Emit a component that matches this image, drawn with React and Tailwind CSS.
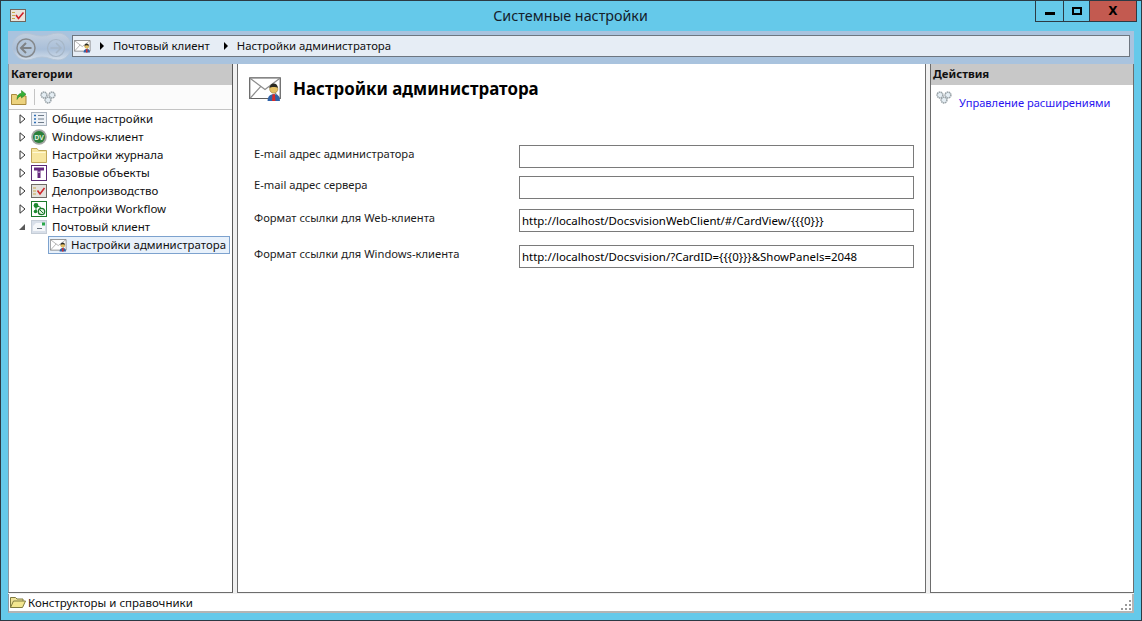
const font = { fontFamily: '"Noto Sans", sans-serif' }

function Envelope({ className }) {
  return (
    <svg viewBox="0 0 32 24" className={`shrink-0 ${className}`}>
      <path d="M.7 1.700h29.600v20H.7z" fill="#fff" stroke="#5f5f5f" strokeWidth="1.200" />
      <path d="M1 2l14.500 11L30 2M1 21.500l10.500-11.500M30 21.500L19.500 10" fill="none" stroke="#8c8c8c" strokeWidth="1.200" />
      <path d="M18 24c0-4 2-6.500 6-6.500s6 2.500 6 6.500z" fill="#2f62a8" />
      <circle cx="24" cy="12.500" r="4" fill="#e6c163" stroke="#8a6d2a" strokeWidth="0.500" />
      <path d="M20 11.500c.2-3 2-4.300 4-4.300s3.800 1.300 4 4.300c-1.500-1.400-6.500-1.400-8 0z" fill="#2a2a22" />
      <path d="M22.800 17.500h2.400L25.600 24h-3.200z" fill="#d92b2b" />
    </svg>
  )
}

function Gears({ className }) {
  return (
    <svg viewBox="0 0 16 13" className={className} fill="#e4edf3" stroke="#98a1a6" strokeWidth="1.500">
      <circle cx="4" cy="4" r="2.900" strokeDasharray="1.500 .5" />
      <circle cx="12" cy="4" r="2.900" strokeDasharray="1.500 .5" />
      <circle cx="8" cy="9" r="2.900" strokeDasharray="1.500 .5" />
    </svg>
  )
}

function FolderUp() {
  return (
    <svg viewBox="0 0 16 16" className="w-[16px] h-[16px]">
      <path d="M.5 5.500h5l1 1.500h8.500v8.500H.5z" fill="#ecd27e" stroke="#a8893c" />
      <path d="M6 10.500c0-4 2-6 4.500-6.300V1.500L15 5.200l-4.500 3.800V6.700C8.500 7 7.300 8.300 6 10.500z" fill="#35b035" stroke="#1d7a1d" strokeWidth="0.500" />
    </svg>
  )
}

function Folder() {
  return (
    <svg viewBox="0 0 16 16" className="w-[16px] h-[16px]">
      <path d="M.5 1.500h5.500l1.500 2h8v12H.5z" fill="#f7e6a0" stroke="#c2a95a" />
      <path d="M1.500 5h13v1H1.500z" fill="#fff8d4" />
    </svg>
  )
}

function OpenFolder() {
  return (
    <svg viewBox="0 0 16 13" className="w-[16px] h-[13px] ml-[1px]">
      <path d="M.5 11.500v-10h5l1.500 1.500h6v2" fill="#efe39a" stroke="#7f7a3f" />
      <path d="M.5 11.500h12l3-6.500H3.500z" fill="#f3e68f" stroke="#7f7a3f" />
    </svg>
  )
}

function ListIcon() {
  return (
    <svg viewBox="0 0 16 14" className="w-[16px] h-[14px]">
      <rect x="0.500" y="0.500" width="15" height="13" fill="#eef2f7" stroke="#a9b3bf" />
      <path d="M7 3.500h6M7 7h6M7 10.500h6" stroke="#6f7c8a" />
      <path d="M3 3.500h2M3 7h2M3 10.500h2" stroke="#2e6fb7" strokeWidth="1.500" />
    </svg>
  )
}

function DvIcon() {
  return (
    <svg viewBox="0 0 16 16" className="w-[16px] h-[16px]">
      <circle cx="8" cy="8" r="7.800" fill="#a3a6a3" />
      <circle cx="8" cy="8" r="6" fill="#2a7f3a" />
      <text x="8" y="10.500" textAnchor="middle" fontSize="7" fontWeight="700" fill="#dcebdc" style={font}>DV</text>
    </svg>
  )
}

function HammerIcon() {
  return (
    <svg viewBox="0 0 16 16" className="w-[16px] h-[16px]">
      <rect x="0.500" y="0.500" width="15" height="15" fill="#fff" stroke="#5b2a75" />
      <path d="M3 2.500h10v3h-3.500V13h-3V5.500H3z" fill="#66297f" />
      <path d="M7 6.500h2V8H7z" fill="#b58fc6" />
    </svg>
  )
}

function CaseIcon() {
  return (
    <svg viewBox="0 0 16 14" className="w-[16px] h-[14px]">
      <rect x="0.500" y="0.500" width="15" height="13" fill="#e4e2de" stroke="#6f6a66" />
      <path d="M2 4h3M2 7h3M2 10h3" stroke="#c9a74e" />
      <path d="M6.500 6.500l2.500 3.500 4.500-6" fill="none" stroke="#d0262c" strokeWidth="1.600" />
    </svg>
  )
}

function WorkflowIcon() {
  return (
    <svg viewBox="0 0 16 16" className="w-[16px] h-[16px]">
      <rect x="0.500" y="0.500" width="15" height="15" fill="#fff" stroke="#1b7a2a" />
      <circle cx="5" cy="4.500" r="2.400" fill="#1b8a2e" />
      <circle cx="4.500" cy="10.500" r="1.800" fill="#1b8a2e" />
      <path d="M5 4.500l5 2M5 4.500V10" stroke="#1b8a2e" />
      <circle cx="10.500" cy="10.500" r="3.200" fill="#dff0df" stroke="#1b7a2a" strokeWidth="1.300" />
      <path d="M9 9l3 3" stroke="#1b7a2a" />
    </svg>
  )
}

function MailClientIcon() {
  return (
    <svg viewBox="0 0 16 14" className="w-[16px] h-[14px]">
      <rect x="0.500" y="0.500" width="15" height="13" fill="#d8dfe9" stroke="#c4ccd6" />
      <path d="M5 3h9v8H2V6z" fill="#f5f7fa" />
      <path d="M6 8.500h5" stroke="#66717d" />
      <rect x="11" y="2.500" width="3" height="3" fill="#29a84a" />
    </svg>
  )
}

function Arrow({ open }) {
  if (open) {
    return (
      <svg viewBox="0 0 8 8" className="w-[8px] h-[8px]">
        <path d="M7 1v6H1z" fill="#595959" />
      </svg>
    )
  }
  return (
    <svg viewBox="0 0 7 10" className="w-[7px] h-[10px]">
      <path d="M1 .800L6 5 1 9.200z" fill="#fff" stroke="#333" />
    </svg>
  )
}

function TreeRow({ icon, label, open }) {
  return (
    <div className="h-[18px] flex items-center pl-[10px] text-[11.500px] text-[#101010] whitespace-nowrap">
      <div className="w-[8px] flex justify-center"><Arrow open={open} /></div>
      <div className="w-[16px] ml-[5px] flex justify-center">{icon}</div>
      <span className="ml-[5px]">{label}</span>
    </div>
  )
}

function FieldRow({ label, value, className }) {
  return (
    <div className={`flex items-center ${className}`}>
      <label className="w-[265px] text-[11.200px] text-[#1c1c1c] whitespace-nowrap -mt-[5px]">{label}</label>
      <div className="w-[395px] h-[23px] border border-[#7a7a7a] bg-white px-[2px] flex items-center text-[11.450px] text-black whitespace-nowrap">
        {value}
      </div>
    </div>
  )
}

function Header({ children }) {
  return (
    <div className="h-[21px] pb-[2px] pl-[2px] bg-[#c8c8c8] flex items-center text-[11.400px] font-bold text-[#111] whitespace-nowrap">
      {children}
    </div>
  )
}

export default function App() {
  return (
    <div style={font} className="w-[1142px] h-[621px] bg-[#65c9ea] border border-[#2c3a44] flex flex-col overflow-hidden">
      {/* title bar */}
      <div className="h-[30px] flex items-start shrink-0">
        <div className="ml-[9px] mt-[8px]">
          <svg viewBox="0 0 16 13" className="w-[16px] h-[13px]">
            <rect x="0.500" y="0.500" width="15" height="12" fill="#e9e4dc" stroke="#70665e" />
            <path d="M2 3.500h3M2 6.500h3M2 9.500h3" stroke="#c9a74e" />
            <path d="M6 6l2.500 3.500 5-6" fill="none" stroke="#cf2028" strokeWidth="1.600" />
          </svg>
        </div>
        <div className="flex-1 text-center text-[14.300px] leading-[20px] mt-[5px] text-[#14202a] pl-[80px]">Системные настройки</div>
        <div className="flex h-[21px] border border-t-0 border-[#2c3a44] mr-[4px]">
          <button className="w-[28px] flex items-center justify-center border-r border-[#2c3a44]">
            <span className="w-[10px] h-[3px] bg-black mt-[4px]" />
          </button>
          <button className="w-[25px] flex items-center justify-center">
            <span className="w-[10px] h-[8px] border-2 border-black" />
          </button>
          <button className="w-[47px] bg-[#c35a50] flex items-center justify-center text-black text-[12px] font-bold border-l border-[#2c3a44]" style={{ fontFamily: '"DejaVu Sans", sans-serif' }}>
            X
          </button>
        </div>
      </div>

      {/* inner window */}
      <div className="flex-1 mx-[7px] mb-[7px] flex flex-col bg-[#a9c3de] min-h-0">
        {/* address bar */}
        <div className="h-[33px] shrink-0 flex items-start pl-[4px] pr-[4px] bg-[#a9c3de]">
          <svg viewBox="0 0 60 29" className="w-[60px] h-[29px] shrink-0 mt-[1px]">
            <defs>
              <linearGradient id="capsule" x1="0" y1="0" x2="0" y2="1">
                <stop offset="0" stopColor="#c3d0df" />
                <stop offset="0.600" stopColor="#a9bfd9" />
                <stop offset="1" stopColor="#d3deea" />
              </linearGradient>
            </defs>
            <path d="M14 1.500c7 0 9 2.500 16 2.500s9-3 16-3c7.500 0 13 6 13 13.500S53.500 28 46 28c-7 0-9-3-16-3s-9 3-16 3C6.500 28 .8 22 .8 14.500S6.500 1.500 14 1.500z" fill="url(#capsule)" stroke="#b4c4d6" />
            <circle cx="14" cy="16" r="9" fill="#b4c6da" stroke="#85898d" strokeWidth="1.500" />
            <path d="M19.500 16h-10M14 11l-5 5 5 5" fill="none" stroke="#7e8285" strokeWidth="2" />
            <circle cx="44" cy="16" r="8.500" fill="none" stroke="#a6b6c7" strokeWidth="1.200" />
            <path d="M38.500 16h10M44 11l5 5-5 5" fill="none" stroke="#a6b6c7" strokeWidth="1.500" />
          </svg>
          <div className="flex-1 h-[22px] mt-[4px] pb-[1px] border border-[#6d7680] bg-[#e6edf5] flex items-center text-[11.350px] text-[#101010] whitespace-nowrap">
            <Envelope className="w-[17px] h-[14px] ml-[1px]" />
            <span className="ml-[9px] w-0 h-0 border-y-[4px] border-y-transparent border-l-[4px] border-l-black" />
            <span className="ml-[9px]">Почтовый клиент</span>
            <span className="ml-[14px] w-0 h-0 border-y-[4px] border-y-transparent border-l-[4px] border-l-black" />
            <span className="ml-[9px]">Настройки администратора</span>
          </div>
        </div>

        {/* panels */}
        <div className="flex-1 flex gap-[4px] min-h-0 bg-[#f0f0f0]">
          <aside className="w-[225px] bg-white border-l border-r border-b border-l-[#8b98a4] border-r-[#5a5a5a] border-b-[#6d6d6d] flex flex-col">
            <Header>Категории</Header>
            <div className="h-[25px] flex items-center pl-[2px] border-b border-[#c4c4c4] bg-[#fbfbfb]">
              <FolderUp />
              <span className="w-px h-[16px] bg-[#c4c4c4] ml-[7px]" />
              <Gears className="w-[16px] h-[13px] ml-[5px]" />
            </div>
            <div className="-ml-px">
              <TreeRow icon={<ListIcon />} label="Общие настройки" />
              <TreeRow icon={<DvIcon />} label="Windows-клиент" />
              <TreeRow icon={<Folder />} label="Настройки журнала" />
              <TreeRow icon={<HammerIcon />} label="Базовые объекты" />
              <TreeRow icon={<CaseIcon />} label="Делопроизводство" />
              <TreeRow icon={<WorkflowIcon />} label="Настройки Workflow" />
              <TreeRow icon={<MailClientIcon />} label="Почтовый клиент" open />
              <div className="h-[18px] ml-[40px] mr-[2px] flex items-center gap-[4px] border border-[#7da2ce] bg-[#e8f1fb] pl-[1px] text-[11.400px] text-[#101010] whitespace-nowrap">
                <Envelope className="w-[17px] h-[14px]" />
                <span>Настройки администратора</span>
              </div>
            </div>
          </aside>

          <main className="w-[689px] bg-white border-x border-b border-[#6d6d6d] flex flex-col">
            <div className="flex items-center pt-[12px] pl-[11px]">
              <Envelope className="w-[33px] h-[25px]" />
              <h1 className="ml-[11px] text-[16.900px] font-bold text-black whitespace-nowrap">Настройки администратора</h1>
            </div>
            <div className="pl-[16px] pt-[44px] flex flex-col">
              <FieldRow label="E-mail адрес администратора" value="" />
              <FieldRow label="E-mail адрес сервера" value="" className="mt-[8px]" />
              <FieldRow label="Формат ссылки для Web-клиента" value="http://localhost/DocsvisionWebClient/#/CardView/{{{0}}}" className="mt-[10px]" />
              <FieldRow label="Формат ссылки для Windows-клиента" value="http://localhost/Docsvision/?CardID={{{0}}}&ShowPanels=2048" className="mt-[13px]" />
            </div>
          </main>

          <aside className="flex-1 bg-white border-l border-r border-b border-[#6d6d6d] flex flex-col">
            <Header>Действия</Header>
            <div className="flex items-start pl-[5px] pt-[6px]">
              <Gears className="w-[16px] h-[13px]" />
              <a className="ml-[7px] mt-[4px] text-[11.100px] text-[#2a14f0] whitespace-nowrap">Управление расширениями</a>
            </div>
          </aside>
        </div>

        {/* status bar */}
        <div className="h-[20px] pt-[1px] shrink-0 bg-[#f0f0f0]">
          <div className="h-full bg-white border-l border-l-[#8b98a4] border-b-2 border-r-2 border-b-[#b4b4b4] border-r-[#b4b4b4] flex items-center text-[11.500px] text-[#101010] relative">
            <OpenFolder />
            <span className="ml-[2px]">Конструкторы и справочники</span>
            <svg viewBox="0 0 10 10" className="absolute right-[1px] bottom-[1px] w-[10px] h-[10px]" fill="#9a9a9a">
              <rect x="8" y="0" width="2" height="2" />
              <rect x="4" y="4" width="2" height="2" />
              <rect x="8" y="4" width="2" height="2" />
              <rect x="0" y="8" width="2" height="2" />
              <rect x="4" y="8" width="2" height="2" />
              <rect x="8" y="8" width="2" height="2" />
            </svg>
          </div>
        </div>
      </div>
    </div>
  )
}
